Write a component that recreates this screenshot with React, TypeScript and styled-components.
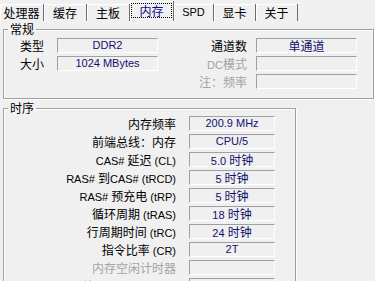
import React from "react";
import styled, { createGlobalStyle } from "styled-components";

const GlobalStyle = createGlobalStyle`
  body {
    margin: 0;
    background: #f0f0f0;
  }
`;

const tabs = [
    { name: "处理器", width: 44 },
    { name: "缓存", width: 43 },
    { name: "主板", width: 43 },
    { name: "内存", width: 44, active: true },
    { name: "SPD", width: 40 },
    { name: "显卡", width: 42 },
    { name: "关于", width: 42 },
];

const general = [
    { label: "类型", value: "DDR2", label2: "通道数", value2: "单通道" },
    { label: "大小", value: "1024 MBytes", label2: "DC模式", value2: "", dim2: true },
    { label: "", value: null, label2: "注：频率", value2: "", dim2: true },
];

const timings = [
    { label: "内存频率", value: "200.9 MHz" },
    { label: "前端总线：内存", value: "CPU/5" },
    { label: "CAS# 延迟 (CL)", value: "5.0 时钟" },
    { label: "RAS# 到CAS# (tRCD)", value: "5 时钟" },
    { label: "RAS# 预充电 (tRP)", value: "5 时钟" },
    { label: "循环周期 (tRAS)", value: "18 时钟" },
    { label: "行周期时间 (tRC)", value: "24 时钟" },
    { label: "指令比率 (CR)", value: "2T" },
    { label: "内存空闲计时器", value: "", dim: true },
    { label: "总CAS# (tRDRAM)", value: "", dim: true },
];

// latin runs use a Tahoma-ish size, han runs are a bit bigger like SimSun
const mixed = (s: string) =>
    s.split(/([\u3000-\u9fff\uff00-\uffef]+)/).filter(Boolean).map((part, i) =>
        /[\u3000-\u9fff\uff00-\uffef]/.test(part) ? <Han key={i}>{part}</Han> : <span key={i}>{part}</span>
    );

const App: React.FC = () => {
    return (
        <Window>
            <GlobalStyle />
            <TabBar>
                {tabs.map((t) => (
                    <Tab key={t.name} $width={t.width} $active={!!t.active}>
                        {t.active ? <Focus>{mixed(t.name)}</Focus> : mixed(t.name)}
                    </Tab>
                ))}
            </TabBar>

            <Group $width={371} $padTop={2} $padBottom={9}>
                <Legend>常规</Legend>
                <GeneralGrid>
                    {general.map((row, i) => (
                        <React.Fragment key={i}>
                            <Label $pad={13}>{mixed(row.label)}</Label>
                            {row.value === null ? <span /> : <Value>{mixed(row.value)}</Value>}
                            <Label $pad={9} $dim={row.dim2}>{mixed(row.label2)}</Label>
                            <Value>{mixed(row.value2)}</Value>
                        </React.Fragment>
                    ))}
                </GeneralGrid>
            </Group>

            <Group $width={293} $padTop={1} $padBottom={9} $gap={2}>
                <Legend>时序</Legend>
                <TimingGrid>
                    {timings.map((row) => (
                        <React.Fragment key={row.label}>
                            <Label $pad={13} $dim={row.dim}>{mixed(row.label)}</Label>
                            <Value>{mixed(row.value)}</Value>
                        </React.Fragment>
                    ))}
                </TimingGrid>
            </Group>
        </Window>
    );
};

const Window = styled.div`
    width: 375px;
    height: 281px;
    overflow: hidden;
    background: #f0f0f0;
    font-family: "Liberation Sans", "Noto Sans CJK SC", sans-serif;
    font-size: 11px;
    color: #000;
`;

const Han = styled.span`
    font-family: "Noto Sans CJK SC", sans-serif;
    font-size: 12px;
`;

const TabBar = styled.div`
    display: flex;
    align-items: flex-end;
    height: 21px;
`;

const Tab = styled.div<{ $width: number; $active: boolean }>`
    box-sizing: border-box;
    width: ${(p) => p.$width}px;
    height: ${(p) => (p.$active ? 20 : 17)}px;
    padding-top: ${(p) => (p.$active ? 2 : 0)}px;
    line-height: ${(p) => (p.$active ? 15 : 17)}px;
    text-align: center;
    border-right: 1px solid #6c6c6c;
    box-shadow: inset 1px 1px 0 #fff;
    white-space: nowrap;
`;

const Focus = styled.span`
    display: block;
    margin: 0 1px;
    height: 15px;
    outline: 1px dotted #000;
    outline-offset: -1px;
    color: #0a0a8a;
`;

const Group = styled.fieldset<{ $width: number; $padTop: number; $padBottom: number; $gap?: number }>`
    box-sizing: border-box;
    width: ${(p) => p.$width}px;
    margin: ${(p) => p.$gap ?? 1}px 0 0 3px;
    padding: ${(p) => p.$padTop}px 0 ${(p) => p.$padBottom}px 0;
    min-width: 0;
    border: 1px solid #a0a0a0;
    box-shadow: 1px 1px 0 #fff, inset 1px 1px 0 #fff;
`;

const Legend = styled.legend`
    margin-left: 4px;
    padding: 0 2px;
    font-family: "Noto Sans CJK SC", sans-serif;
    font-size: 12px;
    line-height: 14px;
`;

const GeneralGrid = styled.div`
    display: grid;
    grid-template-columns: 53px 101px 98px 101px;
    grid-auto-rows: 15px;
    row-gap: 3px;
`;

const TimingGrid = styled.div`
    display: grid;
    grid-template-columns: 185px 86px;
    grid-auto-rows: 15px;
    row-gap: 3px;
`;

const Label = styled.div<{ $pad: number; $dim?: boolean }>`
    padding-right: ${(p) => p.$pad}px;
    text-align: right;
    line-height: 15px;
    white-space: nowrap;
    color: ${(p) => (p.$dim ? "#a3a3a3" : "#000")};
`;

const Value = styled.div`
    box-sizing: border-box;
    height: 15px;
    line-height: 13px;
    text-align: center;
    white-space: nowrap;
    color: #10106e;
    border: 1px solid;
    border-color: #a0a0a0 #fff #fff #a0a0a0;
`;

export default App;
